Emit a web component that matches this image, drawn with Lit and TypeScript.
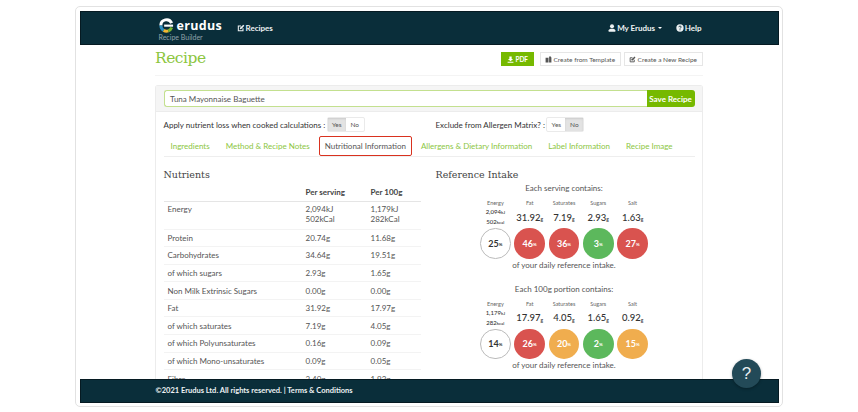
import { LitElement, html, css, svg } from "lit";
import { customElement } from "lit/decorators.js";

const nutrients: [string, string, string][] = [
  ["Protein", "20.74g", "11.68g"],
  ["Carbohydrates", "34.64g", "19.51g"],
  ["of which sugars", "2.93g", "1.65g"],
  ["Non Milk Extrinsic Sugars", "0.00g", "0.00g"],
  ["Fat", "31.92g", "17.97g"],
  ["of which saturates", "7.19g", "4.05g"],
  ["of which Polyunsaturates", "0.16g", "0.09g"],
  ["of which Mono-unsaturates", "0.09g", "0.05g"],
  ["Fibre", "3.40g", "1.92g"],
];

type Dot = { name: string; val: string; pct: string; c: string };
const serving: Dot[] = [
  { name: "Fat", val: "31.92", pct: "46", c: "red" },
  { name: "Saturates", val: "7.19", pct: "36", c: "red" },
  { name: "Sugars", val: "2.93", pct: "3", c: "green" },
  { name: "Salt", val: "1.63", pct: "27", c: "red" },
];
const portion: Dot[] = [
  { name: "Fat", val: "17.97", pct: "26", c: "red" },
  { name: "Saturates", val: "4.05", pct: "20", c: "amber" },
  { name: "Sugars", val: "1.65", pct: "2", c: "green" },
  { name: "Salt", val: "0.92", pct: "15", c: "amber" },
];

const editIcon = svg`<svg class="ic" viewBox="0 0 12 12"><path d="M9 6.5V10H2V3h4" fill="none" stroke="currentColor" stroke-width="1.6"/><path d="M4.5 5.5 9.5 1 11 2.5 6.5 7.5l-2.200.4z" fill="currentColor"/></svg>`;

@customElement("app-root")
export class AppRoot extends LitElement {
  static styles = css`
    :host { display: block; height: 412px; box-sizing: border-box; padding: 6px 75px 5px 75px; font-family: "Lato", "Liberation Sans", sans-serif; color: #444; background: #fff; }
    .frame { height: 100%; box-sizing: border-box; border: 1.5px solid #e2e2e2; border-radius: 5px; padding: 3.5px; display: flex; flex-direction: column; position: relative; overflow: hidden; }
    .bar { background: #0a2e3a; border: 1px solid #061a22; color: #fff; flex: none; box-sizing: border-box; }
    .top { height: 34px; display: flex; align-items: center; padding: 0 76px 0 78px; font-size: 8px; font-weight: 700; color: #eef2f3; }
    .brand { display: flex; flex-direction: column; width: 78px; margin-top: 5px; }
    .logo { display: flex; align-items: center; gap: 3px; }
    .logo svg { width: 15px; height: 15px; }
    .logo span { font-size: 12.500px; font-weight: 700; letter-spacing: .3px; line-height: 15px; color: #fff; font-family: "Open Sans", sans-serif; }
    .sub { font-size: 7px; font-weight: 400; color: #8fa3aa; line-height: 9px; margin-top: 0; }
    .nav { display: flex; align-items: center; gap: 1px; }
    .ic { width: 8px; height: 8px; flex: none; }
    .spacer { flex: 1; }
    .nav.me { margin-right: 14px; }
    .caret { width: 0; height: 0; border: 2px solid transparent; border-top-color: #fff; border-bottom: 0; margin-left: 1.500px; }
    .scroll { flex: 1; min-height: 0; overflow: hidden; padding: 0 76px 0 75.500px; }
    .title { display: flex; align-items: center; height: 29px; padding-bottom: 1px; border-bottom: 1px solid #f4f4f4; box-sizing: content-box; padding-top: 0; }
    h1 { margin: 0; font: 400 15.500px/1 "DejaVu Serif", "Liberation Serif", serif; color: #8cc63f; letter-spacing: -.5px; flex: 1; }
    .btn { display: inline-flex; align-items: center; gap: 1.500px; height: 14.500px; box-sizing: border-box; font-size: 6.500px; border: 1px solid #e6e6e6; color: #555; padding: 0 4.500px; margin-left: 3px; }
    .btn.pdf { background: #76b900; border-color: #76b900; color: #fff; font-weight: 700; margin-right: 3px; padding: 0 4.500px; }
    .btn .ic { width: 7px; height: 7px; }
    .panel { margin-top: 9px; border: 1px solid #ececec; border-bottom: 0; border-radius: 3px 3px 0 0; padding-bottom: 40px; }
    .panel-h { background: #f5f5f5; height: 26.500px; padding: 4.500px 7px 0 7.500px; box-sizing: border-box; border-bottom: 1px solid #ececec; }
    .field { display: flex; height: 17px; }
    .inp { flex: 1; border: 1px solid #c3e08f; border-right: 0; border-radius: 3px 0 0 3px; background: #fff; font-size: 8px; color: #555; padding-left: 5.500px; display: flex; align-items: center; }
    .save { width: 48px; background: #76b900; color: #fff; font-size: 8px; font-weight: 700; display: flex; align-items: center; justify-content: center; border-radius: 0 3px 3px 0; }
    .opts { display: grid; grid-template-columns: 272px 1fr; padding: 5px 7px 0 7.500px; height: 21px; }
    .opt { display: flex; align-items: center; font-size: 8px; color: #333; height: 15px; }
    .opt .lab { margin-right: 1.500px; }
    .tg { display: flex; border: 1px solid #eaeaea; border-radius: 2px; font-size: 6.500px; height: 15px; box-sizing: border-box; }
    .tg span { width: 18px; display: flex; align-items: center; justify-content: center; color: #555; }
    .tg .on { background: #e3e3e3; box-shadow: inset 0 1px 2px #ccc; }
    .tabs { display: flex; margin: 0 7px 0 7.500px; height: 20px; border-bottom: 1px solid #eeeeee; box-sizing: content-box; align-items: stretch; font-size: 8px; color: #8cc63f; gap: 2px; margin-top: -2px; }
    .tabs > div { padding: 0 7px; display: flex; align-items: center; white-space: nowrap; }
    .tabs > div.act { color: #555; border: 1.500px solid #d9321f; border-radius: 2px; padding: 0 5px; margin: 0; }
    .body { display: grid; grid-template-columns: 272px 1fr; padding: 0 7px 0 7.500px; }
    h2 { margin: 0; font: 400 9.500px/12px "DejaVu Serif", "Liberation Serif", serif; color: #444; padding-top: 12px; height: 12px; box-sizing: content-box; }
    .tbl { width: 257px; font-size: 8px; color: #555; }
    .row { display: grid; grid-template-columns: 142px 65px 1fr; padding-left: 0; border-bottom: 1px solid #f3f3f3; height: 17.600px; box-sizing: border-box; align-items: center; }
    .row > span:first-child { padding-left: 4px; }
    .row.hd { height: 21px; margin-top: 0; border-bottom: 1.500px solid #e5e5e5; font-weight: 700; align-items: center; color: #444; padding-top: 2px; }
    .row.en { height: 27.500px; align-items: start; padding-top: 3px; line-height: 9.500px; }
    .ri { display: flex; flex-direction: column; width: 257px; }
    .ri h2 { margin-bottom: 0; }
    .cap { text-align: center; font-size: 8px; color: #555; line-height: 10px; padding-right: 1px; margin-left: 0; width: 257px; }
    .cap.first { margin-top: 2px; }
    .grid { display: grid; grid-template-columns: repeat(5, 34.300px); justify-content: center; justify-items: center; margin-left: 0; width: 257px; }
    .n { font-size: 5.500px; color: #666; height: 10px; line-height: 10px; margin-top: 5px; }
    .v { font-size: 9.500px; font-weight: 500; color: #333; height: 18px; display: flex; align-items: center; white-space: nowrap; }
    .v small { font-size: 5px; align-self: flex-end; margin-bottom: 4px; }
    .v.e { font-size: 6px; flex-direction: column; line-height: 9px; justify-content: center; }
    .v.e small { align-self: auto; margin: 0; font-size: 4.500px; }
    .c { width: 30.500px; height: 30.500px; border-radius: 50%; display: flex; align-items: center; justify-content: center; font-size: 9px; font-weight: 700; color: #fff; margin-top: 2px; box-sizing: border-box; }
    .c small { font-size: 4.500px; margin-top: 2px; }
    .c.red { background: #d9534f; } .c.green { background: #5cb85c; } .c.amber { background: #f0ad4e; }
    .c.white { background: #fff; border: 1px solid #bbb; color: #333; }
    .cap.end { margin-top: 1px; padding-top: 0; height: 10px; }
    .cap.next { margin-top: 14px; }
    .foot { height: 23.500px; display: flex; align-items: center; padding-left: 75px; font-size: 7.500px; font-weight: 700; color: #eef2f3; }
    .help { position: absolute; right: 21px; bottom: 18px; width: 29px; height: 29px; border-radius: 50%; background: #234a58; color: #e8eef0; display: flex; align-items: center; justify-content: center; font-size: 17px; box-shadow: 0 1px 3px rgba(0,0,0,.3); font-family: "Liberation Sans", sans-serif; }
  `;

  private block(energy: [string, string], pct: string, items: Dot[]) {
    return html`<div class="grid">
      <div class="n">Energy</div>${items.map((i) => html`<div class="n">${i.name}</div>`)}
      <div class="v e"><span>${energy[0]}<small>kJ</small></span><span>${energy[1]}<small>kcal</small></span></div>
      ${items.map((i) => html`<div class="v">${i.val}<small>g</small></div>`)}
      <div class="c white">${pct}<small>%</small></div>
      ${items.map((i) => html`<div class="c ${i.c}">${i.pct}<small>%</small></div>`)}
    </div>`;
  }

  render() {
    return html`<div class="frame">
      <div class="bar top">
        <div class="brand">
          <div class="logo">
            <svg viewBox="0 0 16 16">
              <path d="M2 8a6 6 0 0 1 11.500-2.500" fill="none" stroke="#fff" stroke-width="3.200"/>
              <path d="M2 8a6 6 0 0 0 3 5.200" fill="none" stroke="#2e8fc0" stroke-width="3.200"/>
              <path d="M5 13.200a6 6 0 0 0 5 .5" fill="none" stroke="#f2b632" stroke-width="3.200"/>
              <path d="M10 13.700a6 6 0 0 0 3.500-3.500" fill="none" stroke="#7ab82e" stroke-width="3.200"/>
              <rect x="5.500" y="7" width="9.500" height="2.300" fill="#fff"/>
            </svg>
            <span>erudus</span>
          </div>
          <div class="sub">Recipe Builder</div>
        </div>
        <div class="nav">${editIcon}<span>Recipes</span></div>
        <div class="spacer"></div>
        <div class="nav me">
          <svg class="ic" viewBox="0 0 12 12"><circle cx="6" cy="3.500" r="3" fill="currentColor"/><path d="M1 11.500V9.500c0-1.500 2-2.500 5-2.500s5 1 5 2.500v2z" fill="currentColor"/></svg>
          <span>My Erudus</span><i class="caret"></i>
        </div>
        <div class="nav">
          <svg class="ic" viewBox="0 0 12 12"><circle cx="6" cy="6" r="5.500" fill="currentColor"/><path d="M4.300 4.800C4.300 3.700 5 3 6 3s1.800.6 1.800 1.600S6 5.800 6 7" fill="none" stroke="#0a2e3a" stroke-width="1.300"/><rect x="5.300" y="8" width="1.400" height="1.400" fill="#0a2e3a"/></svg>
          <span>Help</span>
        </div>
      </div>

      <div class="scroll">
        <div class="title">
          <h1>Recipe</h1>
          <div class="btn pdf"><svg class="ic" viewBox="0 0 12 12"><path d="M4 1h4v4h2.500L6 9.200 1.500 5H4zM1 10h10v1.500H1z" fill="currentColor"/></svg>PDF</div>
          <div class="btn"><svg class="ic" viewBox="0 0 12 12"><path d="M1 3h5v8H1zM7 1h3l1 2v8H7z" fill="currentColor"/></svg>Create from Template</div>
          <div class="btn">${editIcon}Create a New Recipe</div>
        </div>

        <div class="panel">
          <div class="panel-h">
            <div class="field"><div class="inp">Tuna Mayonnaise Baguette</div><div class="save">Save Recipe</div></div>
          </div>
          <div class="opts">
            <div class="opt"><span class="lab">Apply nutrient loss when cooked calculations :</span><div class="tg"><span class="on">Yes</span><span>No</span></div></div>
            <div class="opt"><span class="lab">Exclude from Allergen Matrix? :</span><div class="tg"><span>Yes</span><span class="on">No</span></div></div>
          </div>
          <div class="tabs">
            <div>Ingredients</div><div>Method &amp; Recipe Notes</div><div class="act">Nutritional Information</div>
            <div>Allergens &amp; Dietary Information</div><div>Label Information</div><div>Recipe Image</div>
          </div>
          <div class="body">
            <div>
              <h2>Nutrients</h2>
              <div class="tbl">
                <div class="row hd"><span></span><span>Per serving</span><span>Per 100g</span></div>
                <div class="row en"><span>Energy</span><span>2,094kJ<br />502kCal</span><span>1,179kJ<br />282kCal</span></div>
                ${nutrients.map((r) => html`<div class="row"><span>${r[0]}</span><span>${r[1]}</span><span>${r[2]}</span></div>`)}
              </div>
            </div>
            <div class="ri">
              <h2>Reference Intake</h2>
              <div class="cap first">Each serving contains:</div>
              ${this.block(["2,094", "502"], "25", serving)}
              <div class="cap end">of your daily reference intake.</div>
              <div class="cap next">Each 100g portion contains:</div>
              ${this.block(["1,179", "282"], "14", portion)}
              <div class="cap end">of your daily reference intake.</div>
            </div>
          </div>
        </div>
      </div>

      <div class="bar foot">©2021 Erudus Ltd. All rights reserved. | Terms &amp; Conditions</div>
      <div class="help">?</div>
    </div>`;
  }
}
